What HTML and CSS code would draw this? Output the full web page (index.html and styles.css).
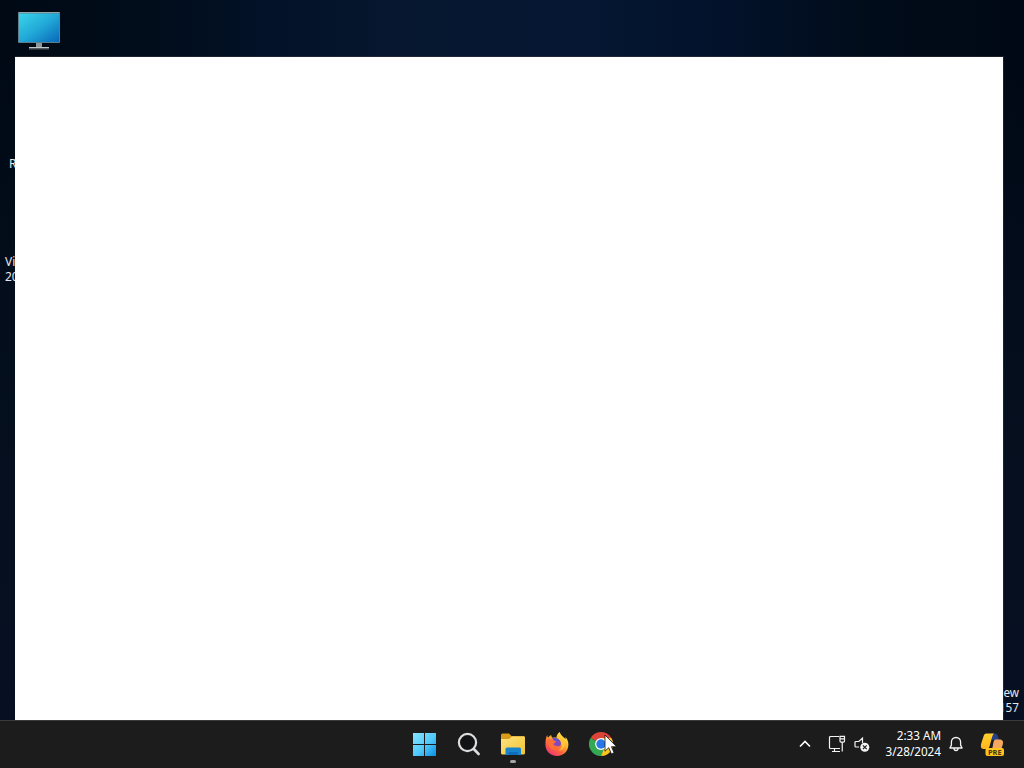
FILE: index.html
```html
<!DOCTYPE html>
<html lang="en">
<head>
<meta charset="utf-8">
<title>Desktop</title>
<link rel="stylesheet" href="styles.css">
</head>
<body>
<div class="desktop">
  <main class="wallpaper">
    <svg class="computer" viewBox="0 0 44 40" width="44" height="40">
      <defs><linearGradient id="screen" x1="0" y1="0" x2="1" y2="1"><stop offset="0" stop-color="#39d5e8"/><stop offset=".5" stop-color="#22a9d8"/><stop offset="1" stop-color="#0868b8"/></linearGradient></defs>
      <rect x="1" y="1" width="42" height="31" rx="1" fill="#5b7f8c"/>
      <rect x="2" y="2.500" width="40" height="28.500" fill="url(#screen)"/>
      <path d="M1.500 1.500H42.500" stroke="#8fa5aa"/>
      <path d="M19 32h6v4h-6z" fill="#8b989d"/>
      <path d="M12 36h20v2.500H12z" fill="#55595c"/><path d="M12 36.500h20" stroke="#c0c7ca"/>
    </svg>
    <span class="label label-r">R</span>
    <span class="label label-vi">Vi<br>20</span>
    <span class="label build">iew<br>157</span>
    <section class="window"></section>
  </main>
  <footer class="taskbar">
    <nav class="apps">
      <span class="app"><svg viewBox="0 0 24 24" width="24" height="24">
        <defs><linearGradient id="win" gradientUnits="userSpaceOnUse" x1="0" y1="0" x2="24" y2="24"><stop offset="0" stop-color="#8ae5ff"/><stop offset=".55" stop-color="#4fc8fa"/><stop offset="1" stop-color="#078be4"/></linearGradient></defs>
        <path fill="url(#win)" d="M0 1h11v11H0zM12 1h11v11H12zM0 13h11v11H0zM12 13h11v11H12z"/></svg></span>
      <span class="app"><svg viewBox="0 0 24 24" width="24" height="24"><circle cx="10.500" cy="10.500" r="8.600" fill="#111315" stroke="#dedede" stroke-width="2.200"/><path d="M16.800 17l4.700 4.900" stroke="#dedede" stroke-width="2.800" stroke-linecap="round"/></svg></span>
      <span class="app running"><svg viewBox="0 0 24 24" width="24" height="24">
        <defs><linearGradient id="folder" x1="0" y1="0" x2="1" y2="1"><stop offset="0" stop-color="#ffe380"/><stop offset="1" stop-color="#f0c333"/></linearGradient></defs>
        <path d="M0 3Q0 1.500 1.500 1.500H8L10.500 4h12q1 0 1 1v5H0z" fill="#d99c16"/><path d="M0 7h8l3-2.500h12q1 0 1 1V21q0 1.500-1.500 1.500h-21Q0 22.500 0 21z" fill="url(#folder)"/>
        <path d="M4.500 23v-6q0-1.500 1.500-1.500h12.500q1.500 0 1.500 1.500v6z" fill="#1784cc"/><path d="M7.500 23v-2q0-1 1-1H16q1 0 1 1v2z" fill="#0e6db8"/></svg></span>
      <span class="app"><svg viewBox="0 0 24 24" width="24" height="24">
        <defs><linearGradient id="fox" x1=".85" y1=".05" x2=".2" y2="1"><stop offset="0" stop-color="#fff04c"/><stop offset=".35" stop-color="#ffb52e"/><stop offset=".68" stop-color="#ff6140"/><stop offset="1" stop-color="#e5307b"/></linearGradient></defs>
        <path d="M14.800 0c-2.500 1.800-3.300 3.600-3.300 5.700-1.500-.2-2.700 0-4 .1C6.500 4.800 6.200 4 6.200 3 5 3.500 4 4.500 3.400 5.600 2.500 5.500 2.300 4 2.300 3 .9 5 .4 9 .4 12.500.4 19 5.200 24 12 24s11.400-5 11.400-11.500c0-3.200-1.200-6-3-7.600l.2 2.300C19 5 15.700 3.800 14.800 0z" fill="url(#fox)"/>
        <circle cx="11" cy="11.500" r="5" fill="#8549bd"/>
        <path d="M7 6c3-.8 7 .2 8.500 4-2-1.500-4-1.500-5.500-1z" fill="#5c55d5"/>
        <path d="M1.500 9c2-2.500 5-2.500 7.300-.4l2.200.700c-.2 1.200-1.400 1.600-2 2-1 .7-.6 2.300 1.500 2.500 2 .2 3 1.500 5.500-.7-.5 4-5.500 6.300-9.500 3.700C3.500 15 3.500 11 1.500 9z" fill="#ff7038"/>
        <path d="M13.500 4.500c4.500 1 7.500 5 6.200 9-1 3.500-3.700 5-6 5.300 4-2 4.200-7 1.800-9.800-1.500-1.400-2.500-2.500-2-4.500z" fill="#ffc431"/></svg></span>
      <span class="app"><svg viewBox="0 0 24 24" width="24" height="24">
        <path d="M12 12L1.600 6A12 12 0 0 1 22.400 6z" fill="#dc4438"/><path d="M12 12L1.600 6A12 12 0 0 0 12 24l5-9z" fill="#35a853"/><path d="M12 12h5L12 24A12 12 0 0 0 22.400 6H12z" fill="#fbc520"/><circle cx="12" cy="12" r="5.900" fill="#fff"/><circle cx="12" cy="12" r="4.700" fill="#2877e8"/></svg></span>
    </nav>
    <div class="tray">
      <svg class="chevron" viewBox="0 0 14 10" width="14" height="10"><path d="M2 7.500l5-5 5 5" fill="none" stroke="#fff" stroke-width="1.600"/></svg>
      <svg class="network" viewBox="0 0 18 18" width="18" height="18" fill="none" stroke="#f3f3f3" stroke-width="1.200"><path d="M11 1.500H2.500q-1 0-1 1v10q0 1 1 1H12M6.500 13.500v3M4 16.500h8M12 1.300h4.500v4.800q0 1-1 1h-2.500q-1 0-1-1zM14.250 7.100V16.500M12.500 3.800h3.500"/></svg>
      <svg class="volume" viewBox="0 0 16 16" width="16" height="16"><path d="M8.500 7V2.200L4.800 5.500H2q-1 0-1 1V10q0 1 1 1h3" fill="none" stroke="#f3f3f3" stroke-width="1.200"/><circle cx="10.800" cy="11.200" r="4.500" fill="#f4f4f4"/><path d="M8.900 9.300l3.800 3.800m0-3.800l-3.800 3.800" stroke="#202020" stroke-width="1.200"/></svg>
      <div class="clock"><span class="time">2:33 AM</span><span class="date">3/28/2024</span></div>
      <svg class="bell" viewBox="0 0 16 16" width="16" height="16" fill="none" stroke="#f3f3f3" stroke-width="1.300" stroke-linejoin="round"><path d="M8 1.500c-2.700 0-4.600 2-4.600 4.600v3L1.900 12h12.200l-1.500-2.900v-3C12.600 3.500 10.700 1.500 8 1.500zM6 12.500a2 2 0 0 0 4 0"/></svg>
      <svg class="copilot" viewBox="0 0 26 26" width="26" height="26">
        <defs><linearGradient id="gold" x1="0" y1="0" x2="0" y2="1"><stop offset="0" stop-color="#ffd02d"/><stop offset="1" stop-color="#ffb51c"/></linearGradient></defs>
        <path d="M12 2.500h4q2 0 2.700 2l1.500 4.500H13z" fill="#253f82"/>
        <path d="M7.500 2.500H15c-1 1-1.500 2-2 4l-2.500 9q-.7 2.500-3 2.500H4.500c-3 0-3-3-2-6.500l2-6q.6-3 3-3z" fill="url(#gold)"/>
        <path d="M16.500 8.500h4c3.500 0 4 2.500 3.300 5L22 19h-9l1.500-8q.3-2.500 2-2.500z" fill="#f6a861"/>
        <rect x="6.500" y="17" width="18.500" height="8" rx="2" fill="#ffc51c"/><text class="badge" x="15.750" y="23.600" text-anchor="middle">PRE</text></svg>
    </div>
  </footer>
  <svg class="cursor" viewBox="0 0 14 22" width="14" height="22"><path d="M1 1v16.200l3.700-3.500 2.700 6.200 2.700-1.200-2.700-6h5.200z" fill="#fff" stroke="#111" stroke-width=".8"/></svg>
</div>
</body>
</html>
```
FILE: styles.css
```css
* { box-sizing: border-box; }
body { margin: 0; overflow: hidden; background: #000914; font-family: "Noto Sans", "Open Sans", sans-serif; }
svg { display: block; flex: none; }
.desktop { position: relative; display: flex; flex-direction: column; width: 1024px; height: 768px; }
.wallpaper {
  position: relative; flex: 1; overflow: hidden;
  background:
    linear-gradient(to bottom, transparent 60px, rgba(5, 16, 32, .85) 400px, #071022),
    linear-gradient(to right, #000914 0, #010d1b 150px, #031229 280px, #06172f 400px, #051733 580px, #03122b 720px, #010c1a 870px, #000814 1024px);
}
.computer { position: absolute; left: 17px; top: 11px; }
.window { position: absolute; left: 15px; top: 57px; width: 988px; height: 663px; background: #fff; box-shadow: 0 0 0 1px rgba(55, 55, 65, .5); clip-path: inset(-1px -1px 0 0); }
.label { position: absolute; color: #e5e7ec; font-size: 12px; line-height: 15px; white-space: nowrap; }
.label-r { left: 9px; top: 156px; }
.label-vi { left: 5px; top: 254px; }
.build { right: 5px; top: 685px; font-size: 11.7px; text-align: right; line-height: 14.5px; }
.taskbar { display: flex; justify-content: space-between; height: 48px; padding: 0 19px 0 402.5px; background: #1c1c1c; border-top: 1px solid #393a3c; }
.apps { display: flex; }
.app { position: relative; display: flex; width: 44px; justify-content: center; padding-top: 11px; }
.running::after { content: ""; position: absolute; bottom: 5px; left: 19px; width: 6px; height: 3px; border-radius: 2px; background: #a5a5a5; }
.tray { display: flex; align-items: center; padding-bottom: 1px; }
.chevron { margin-right: 16px; }
.network { margin-right: 8px; }
.volume { margin-right: 15px; }
.clock { display: flex; flex-direction: column; align-items: flex-end; width: 56px; margin-right: 7px; padding-bottom: 2px; color: #fff; font-size: 11.7px; line-height: 16px; white-space: nowrap; }
.bell { margin-right: 15px; }
.badge { fill: #4b3410; font: 700 7.4px "Open Sans", sans-serif; }
.cursor { position: absolute; left: 604px; top: 734px; }
```
